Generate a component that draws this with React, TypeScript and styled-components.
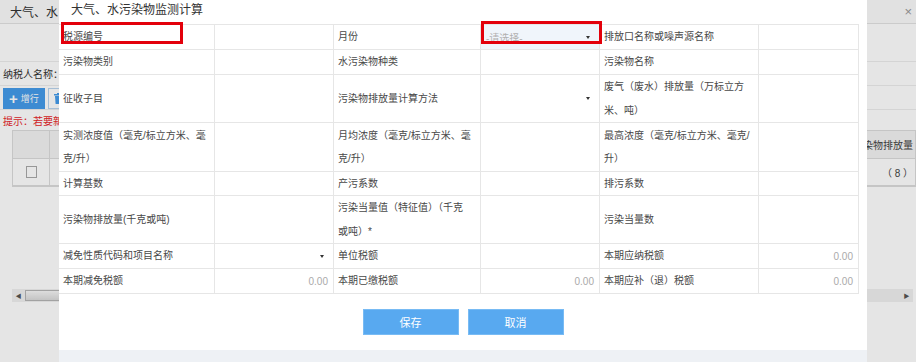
import styled, { createGlobalStyle } from 'styled-components';

const GlobalStyle = createGlobalStyle`
  html, body {
    margin: 0;
    padding: 0;
  }
  body {
    width: 916px;
    height: 362px;
    overflow: hidden;
    background: #fff;
    font-family: "Liberation Sans", "Noto Sans CJK SC", sans-serif;
  }
  * {
    box-sizing: border-box;
  }
`;

const Screen = styled.div`
  position: relative;
  width: 916px;
  height: 362px;
  overflow: hidden;
`;

/* ---------- page behind the dialog ---------- */

const Page = styled.div`
  display: flex;
  flex-direction: column;
  height: 100%;
  background: #fff;
  color: #333;
`;

const PageHeader = styled.div`
  height: 24px;
  display: flex;
  align-items: center;
  justify-content: space-between;
  padding: 0 4px 0 10px;
  background: #fbfbfb;
  border-bottom: 1px solid #e2e2e2;
  font-size: 12px;
`;

const CloseMark = styled.span`
  font-size: 13px;
  color: #999;
`;

const QueryArea = styled.div`
  height: 38px;
  border-bottom: 1px solid #ececec;
`;

const TaxpayerRow = styled.div`
  height: 24px;
  display: flex;
  align-items: center;
  padding-left: 3px;
  font-size: 10px;
  border-bottom: 1px solid #ececec;
`;

const Toolbar = styled.div`
  height: 24px;
  display: flex;
  align-items: flex-end;
  gap: 3px;
  padding-left: 3px;
  border-bottom: 1px solid #ececec;
`;

const ToolButton = styled.button<{ $primary?: boolean }>`
  height: 21px;
  padding: 0 5px;
  display: flex;
  align-items: center;
  gap: 3px;
  font-family: inherit;
  font-size: 9px;
  border: 1px solid ${(p) => (p.$primary ? '#459bea' : '#b9d4ee')};
  background: ${(p) => (p.$primary ? '#459bea' : '#fff')};
  color: ${(p) => (p.$primary ? '#fff' : '#459bea')};
`;

const Plus = styled.span`
  font-size: 15px;
  line-height: 1;
  font-weight: bold;
`;

const Hint = styled.div`
  height: 20px;
  display: flex;
  align-items: center;
  padding-left: 3px;
  font-size: 10px;
  color: #e8262b;
`;

const ListGrid = styled.div`
  margin-left: 12px;
  width: 904px;
  display: grid;
  grid-template-columns: 37px 1fr;
  grid-template-rows: 28px 27px;
  border: 1px solid #dcdcdc;
  border-right: 0;
`;

const ListCell = styled.div<{ $head?: boolean }>`
  display: flex;
  align-items: center;
  justify-content: flex-end;
  padding-right: 2px;
  font-size: 10px;
  color: #444;
  background: ${(p) => (p.$head ? '#f3f3f3' : '#fff')};
  border-right: 1px solid #dcdcdc;
  border-bottom: 1px solid #dcdcdc;
`;

const CheckCell = styled(ListCell)`
  justify-content: center;
  padding: 0;
`;

const CheckBox = styled.span`
  width: 11px;
  height: 12px;
  border: 1px solid #a9a9a9;
  background: #fff;
`;

const ScrollBar = styled.div`
  margin: 102px 3px 0 12px;
  height: 13px;
  display: flex;
  align-items: stretch;
  background: #f0f0f0;
`;

const ScrollArrow = styled.span`
  width: 13px;
  display: flex;
  align-items: center;
  justify-content: center;
  font-size: 6px;
  color: #555;
`;

const ScrollThumb = styled.span`
  width: 820px;
  margin: 1px 0;
  border: 1px solid #b5b5b5;
  background: linear-gradient(#f6f6f6, #dadada);
`;

const ScrollTrack = styled.span`
  flex: 1;
`;

const Mask = styled.div`
  position: absolute;
  inset: 0;
  background: rgba(0, 0, 0, 0.1);
`;

/* ---------- dialog ---------- */

const Dialog = styled.div`
  position: absolute;
  left: 59px;
  top: 0;
  width: 808px;
  height: 362px;
  display: flex;
  flex-direction: column;
  background: #fff;
`;

const DialogTitle = styled.div`
  height: 24px;
  padding-left: 12px;
  line-height: 21px;
  font-size: 12px;
  color: #333;
`;

const FormGrid = styled.div`
  display: grid;
  grid-template-columns: 155px 118px 146px 118px 158px 99px;
  grid-template-rows: 24px 24px 47px 48px 23px 47px 24px 24px;
  gap: 1px;
  width: fit-content;
  padding: 1px 1px 1px 0;
  background: #e6e6e6;
`;

const Label = styled.div`
  display: flex;
  align-items: center;
  padding: 0 4px;
  background: #fff;
  font-size: 10px;
  line-height: 23.5px;
  color: #484848;
  white-space: pre-line;
`;

const Field = styled.div<{ $select?: boolean }>`
  display: flex;
  align-items: center;
  justify-content: flex-end;
  padding: 0 5px;
  background: ${(p) => (p.$select ? '#f0f5fb' : '#fff')};
  font-size: 10px;
  color: #aaa;
`;

const Placeholder = styled.span`
  margin-right: auto;
  color: #b0b0b0;
`;

const Caret = styled.span`
  width: 0;
  height: 0;
  margin-right: 4px;
  border-top: 3px solid #333;
  border-left: 2.5px solid transparent;
  border-right: 2.5px solid transparent;
`;

const Actions = styled.div`
  display: flex;
  justify-content: center;
  gap: 9px;
  margin-top: 15px;
`;

const ActionButton = styled.button`
  width: 96px;
  height: 26px;
  border: 1px solid #78bbf4;
  background: #58a9f0;
  color: #fff;
  font-family: inherit;
  font-size: 11px;
`;

const DialogFooter = styled.div`
  margin-top: auto;
  height: 12px;
  background: #eef1f5;
`;

/* red marks drawn over the screenshot */
const Highlight = styled.div<{ $left: number; $top: number; $width: number; $height: number }>`
  position: absolute;
  left: ${(p) => p.$left}px;
  top: ${(p) => p.$top}px;
  width: ${(p) => p.$width}px;
  height: ${(p) => p.$height}px;
  border: 3px solid #e3000b;
`;

type Value = { kind: 'empty' } | { kind: 'select' } | { kind: 'caret' } | { kind: 'amount'; text: string };

const empty: Value = { kind: 'empty' };
const zero: Value = { kind: 'amount', text: '0.00' };

const rows: [string, Value, string, Value, string, Value][] = [
  ['税源编号', empty, '月份', { kind: 'select' }, '排放口名称或噪声源名称', empty],
  ['污染物类别', empty, '水污染物种类', empty, '污染物名称', empty],
  ['征收子目', empty, '污染物排放量计算方法', { kind: 'caret' }, '废气（废水）排放量（万标立方\n米、吨）', empty],
  [
    '实测浓度值（毫克/标立方米、毫\n克/升）',
    empty,
    '月均浓度（毫克/标立方米、毫\n克/升）',
    empty,
    '最高浓度（毫克/标立方米、毫克/\n升）',
    empty,
  ],
  ['计算基数', empty, '产污系数', empty, '排污系数', empty],
  ['污染物排放量(千克或吨)', empty, '污染当量值（特征值）（千克\n或吨）*', empty, '污染当量数', empty],
  ['减免性质代码和项目名称', { kind: 'caret' }, '单位税额', empty, '本期应纳税额', zero],
  ['本期减免税额', zero, '本期已缴税额', zero, '本期应补（退）税额', zero],
];

function FieldCell({ value }: { value: Value }) {
  if (value.kind === 'select') {
    return (
      <Field $select>
        <Placeholder>-请选择-</Placeholder>
        <Caret />
      </Field>
    );
  }
  if (value.kind === 'caret') {
    return (
      <Field>
        <Caret />
      </Field>
    );
  }
  if (value.kind === 'amount') {
    return <Field>{value.text}</Field>;
  }
  return <Field />;
}

function TrashIcon() {
  return (
    <svg width="9" height="11" viewBox="0 0 9 11" fill="#459bea">
      <rect x="0" y="1" width="9" height="1.5" />
      <rect x="3" y="0" width="3" height="1.5" />
      <path d="M1 3h7l-.6 8H1.6z" />
    </svg>
  );
}

function BackgroundPage() {
  return (
    <Page>
      <PageHeader>
        {/* the rest of the tab title lies under the dialog */}
        <span>大气、水</span>
        <CloseMark>×</CloseMark>
      </PageHeader>
      <QueryArea />
      <TaxpayerRow>纳税人名称：</TaxpayerRow>
      <Toolbar>
        <ToolButton $primary>
          <Plus>+</Plus>增行
        </ToolButton>
        <ToolButton>
          <TrashIcon />
        </ToolButton>
      </Toolbar>
      <Hint>提示：若要新</Hint>
      <ListGrid>
        <CheckCell $head />
        <ListCell $head>污染物排放量</ListCell>
        <CheckCell>
          <CheckBox />
        </CheckCell>
        <ListCell>（ 8 ）</ListCell>
      </ListGrid>
      <ScrollBar>
        <ScrollArrow>◀</ScrollArrow>
        <ScrollThumb />
        <ScrollTrack />
        <ScrollArrow>▶</ScrollArrow>
      </ScrollBar>
    </Page>
  );
}

export default function App() {
  return (
    <Screen>
      <GlobalStyle />
      <BackgroundPage />
      <Mask />
      <Dialog>
        <DialogTitle>大气、水污染物监测计算</DialogTitle>
        <FormGrid>
          {rows.map((row, i) => (
            <>
              <Label key={`a${i}`}>{row[0]}</Label>
              <FieldCell key={`b${i}`} value={row[1]} />
              <Label key={`c${i}`}>{row[2]}</Label>
              <FieldCell key={`d${i}`} value={row[3]} />
              <Label key={`e${i}`}>{row[4]}</Label>
              <FieldCell key={`f${i}`} value={row[5]} />
            </>
          ))}
        </FormGrid>
        <Actions>
          <ActionButton>保存</ActionButton>
          <ActionButton>取消</ActionButton>
        </Actions>
        <DialogFooter />
      </Dialog>
      <Highlight $left={61} $top={22} $width={122} $height={22} />
      <Highlight $left={481} $top={21} $width={121} $height={23} />
    </Screen>
  );
}
